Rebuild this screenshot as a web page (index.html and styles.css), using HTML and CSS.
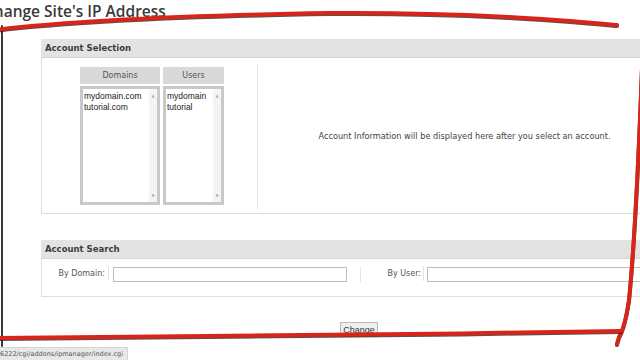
FILE: index.html
```html
<!DOCTYPE html>
<html>
<head>
<meta charset="utf-8">
<title>Change Site's IP Address</title>
<link rel="stylesheet" href="styles.css">
</head>
<body>
<div class="page">
  <h1 class="title">Change Site's IP Address</h1>

  <section class="panel sel">
    <div class="panel-head">Account Selection</div>
    <div class="panel-body sel-body">
      <div class="lists">
        <div class="col col-dom">
          <div class="col-head">Domains</div>
          <div class="listbox">
            <div class="listbox-inner">
              <div class="items">
                <div>mydomain.com</div>
                <div>tutorial.com</div>
              </div>
              <div class="scroll"><span class="arr">&#9650;</span><span class="arr">&#9660;</span></div>
            </div>
          </div>
        </div>
        <div class="col col-usr">
          <div class="col-head">Users</div>
          <div class="listbox">
            <div class="listbox-inner">
              <div class="items">
                <div>mydomain</div>
                <div>tutorial</div>
              </div>
              <div class="scroll"><span class="arr">&#9650;</span><span class="arr">&#9660;</span></div>
            </div>
          </div>
        </div>
      </div>
      <div class="info">Account Information will be displayed here after you select an account.</div>
    </div>
  </section>

  <section class="panel search">
    <div class="panel-head">Account Search</div>
    <div class="panel-body search-body">
      <label class="lbl lbl-dom">By Domain:</label>
      <span class="sep"></span>
      <span class="input input-dom"></span>
      <span class="sep sep-mid"></span>
      <label class="lbl lbl-usr">By User:</label>
      <span class="sep sep-usr"></span>
      <span class="input input-usr"></span>
    </div>
  </section>

  <div class="actions"><span class="btn">Change</span></div>

  <div class="status">6222/cgi/addons/ipmanager/index.cgi</div>

  <svg class="marker" width="640" height="360" viewBox="0 0 640 360">
    <path class="dark" d="M2 26 L2 346"/>
    <path class="red" d="M-6 30 C 60 22, 150 16, 330 13 C 470 12, 560 20, 617 25"/>
    <path class="red" d="M642 68 C 639 150, 634 250, 629 300 C 626 320, 622 332, 619 337 L 617 344"/>
    <path class="red" d="M-6 338 C 150 336, 400 335, 621 331"/>
  </svg>
</div>
</body>
</html>
```
FILE: styles.css
```css
html, body {
  margin: 0;
  padding: 0;
  background: #fff;
}
body {
  width: 640px;
  height: 360px;
  overflow: hidden;
  font-family: "DejaVu Sans", Verdana, sans-serif;
  color: #333;
}
.page {
  position: relative;
  width: 640px;
  height: 360px;
  overflow: hidden;
}
.title {
  margin: 0 0 0 -16px;
  padding-top: 2px;
  height: 39px;
  box-sizing: border-box;
  font-family: "Open Sans", "DejaVu Sans", sans-serif;
  font-weight: 600;
  font-size: 15.5px;
  line-height: 19px;
  color: #3a3a3a;
  white-space: nowrap;
}
.panel {
  margin-left: 41px;
  width: 631px;
}
.panel-head {
  height: 19px;
  line-height: 19px;
  background: #e3e3e3;
  border-bottom: 1px solid #d6d6d6;
  padding-left: 4px;
  font-weight: bold;
  font-size: 8.5px;
  color: #3c3c3c;
  box-sizing: border-box;
}
.panel-body {
  border: 1px solid #dedede;
  border-top: none;
  box-sizing: border-box;
}
.sel-body {
  height: 156px;
  display: flex;
}
.lists {
  width: 216px;
  flex: none;
  display: flex;
  gap: 3px;
  padding: 3px 0 3px 38px;
  box-sizing: border-box;
  border-right: 1px solid #e2e2e2;
  margin: 6px 0 4px;
}
.col {
  display: flex;
  flex-direction: column;
  gap: 2px;
}
.col-dom { width: 80px; }
.col-usr { width: 61px; }
.col-head {
  height: 17px;
  line-height: 17px;
  background: #d9d9d9;
  text-align: center;
  font-size: 8px;
  color: #555;
}
.listbox {
  height: 119px;
  background: #c9c9c9;
  padding: 3px;
  box-sizing: border-box;
}
.listbox-inner {
  height: 100%;
  background: #fff;
  display: flex;
}
.items {
  flex: 1;
  padding: 2px 0 0 1px;
  font-family: "Liberation Sans", Arial, sans-serif;
  font-size: 8.5px;
  line-height: 11px;
  color: #222;
  white-space: nowrap;
  overflow: hidden;
}
.scroll {
  width: 8px;
  flex: none;
  background: #f4f4f4;
  display: flex;
  flex-direction: column;
  justify-content: space-between;
  align-items: center;
  padding: 4px 0 4px;
}
.arr {
  font-size: 4px;
  line-height: 5px;
  color: #aaa;
}
.info {
  flex: 1;
  display: flex;
  align-items: center;
  justify-content: center;
  font-size: 8.2px;
  color: #444;
}
.search {
  margin-top: 26px;
}
.search-body {
  height: 38px;
  display: flex;
  align-items: flex-start;
  padding-top: 8px;
  font-size: 8px;
  color: #555;
}
.lbl {
  line-height: 14px;
  text-align: right;
  box-sizing: border-box;
}
.lbl-dom { width: 63px; }
.lbl-usr { width: 60px; }
.sep {
  width: 1px;
  height: 15px;
  background: #e4e4e4;
  margin: -1px 4px 0 3px;
}
.sep-usr {
  margin: -1px 3px 0 2px;
}
.sep-mid {
  margin: 0 0 0 13px;
  height: 16px;
}
.input {
  height: 15px;
  border: 1px solid #bdbdbd;
  box-sizing: border-box;
  background: #fff;
}
.input-dom { width: 234px; }
.input-usr { width: 240px; }
.actions {
  display: flex;
  margin-top: 25px;
  padding-left: 340px;
}
.btn {
  display: block;
  width: 38px;
  height: 15px;
  line-height: 14px;
  border: 1px solid #b9b9b9;
  background: #efefef;
  box-sizing: border-box;
  text-align: center;
  font-family: "Liberation Sans", Arial, sans-serif;
  font-size: 9px;
  color: #333;
}
.status {
  position: absolute;
  left: 0;
  bottom: 0;
  width: 128px;
  height: 13px;
  line-height: 13px;
  background: #e8e8e8;
  border-top: 1px solid #d4d4d4;
  border-right: 1px solid #d4d4d4;
  box-sizing: border-box;
  font-size: 6.5px;
  color: #555;
  white-space: nowrap;
  overflow: hidden;
}
.marker {
  position: absolute;
  left: 0;
  top: 0;
  pointer-events: none;
  overflow: visible;
}
.marker path {
  fill: none;
  stroke-linecap: round;
  stroke-linejoin: round;
}
.marker .red {
  stroke: #d9241a;
  stroke-width: 4;
  filter: drop-shadow(0 1.5px 0.6px rgba(40, 20, 20, 0.75));
}
.marker .dark {
  stroke: #3a3a3a;
  stroke-width: 2;
}
```
